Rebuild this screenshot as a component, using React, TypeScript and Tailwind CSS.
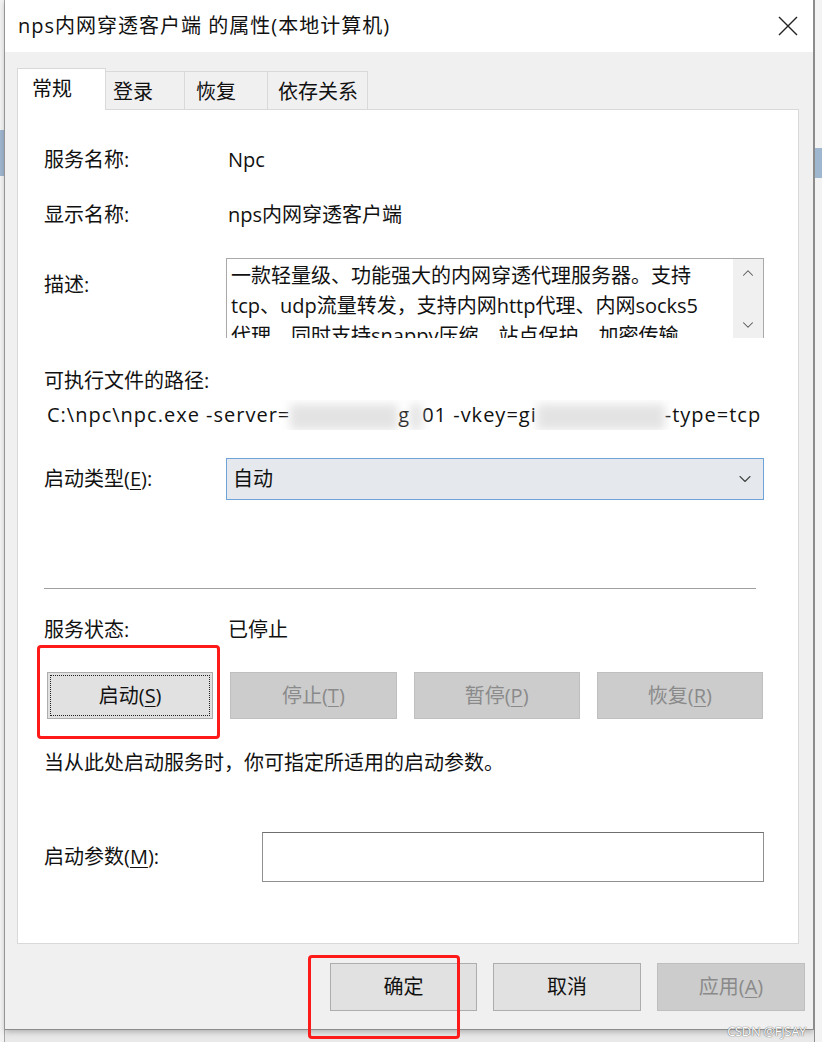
import React from 'react';
import { ChevronDown, ChevronUp } from 'lucide-react';

const Key = ({ children }: { children: React.ReactNode }) => (
  <span className="underline decoration-1 underline-offset-[3px]">{children}</span>
);

type BtnProps = {
  text: string;
  accel?: string;
  disabled?: boolean;
  focused?: boolean;
  className?: string;
};

const WinButton = ({ text, accel, disabled, focused, className = '' }: BtnProps) => (
  <div
    className={`flex items-center justify-center border text-[20px] leading-none ${
      disabled ? 'bg-[#cccccc] border-[#bfbfbf] text-[#8a8a8a]' : 'bg-[#e1e1e1] border-[#adadad] text-[#111]'
    } ${focused ? 'outline-1 outline-dotted outline-[#222] outline-offset-[-4px]' : ''} ${className}`}
  >
    {text}
    {accel && (
      <>
        (<Key>{accel}</Key>)
      </>
    )}
  </div>
);

const Blur = ({ w }: { w: number }) => (
  <span
    className="inline-block h-[26px] align-middle bg-[#d8d8d8] blur-[5px] opacity-70"
    style={{ width: w }}
  />
);

const App = () => {
  return (
    <div className="relative flex h-[1042px] w-[822px] overflow-hidden bg-[#e9e9e9] font-['Open_Sans','Noto_Sans_CJK_SC',sans-serif] text-[#111]">
      {/* background app, left edge */}
      <div className="flex w-[5px] flex-col border-r border-[#a8a8a8] bg-[#f3f3f3]">
        <div className="mt-[130px] h-[46px] bg-[#9fb6cf]" />
      </div>

      {/* dialog */}
      <div className="flex w-[809px] flex-col">
        <div className="flex h-[1030px] flex-col border-b border-r border-[#8c8c8c] shadow-[0_2px_6px_rgba(0,0,0,0.25)]">
          {/* title bar */}
          <div className="flex h-[52px] items-center justify-between bg-white pl-[13px] pr-[15px]">
            <span className="text-[20px] leading-none tracking-[1px]">nps内网穿透客户端 的属性(本地计算机)</span>
            <svg width="20" height="20" viewBox="0 0 20 20">
              <path d="M1 1 L19 19 M19 1 L1 19" stroke="#222" strokeWidth="1.4" />
            </svg>
          </div>

          {/* body */}
          <div className="flex flex-1 flex-col bg-[#f0f0f0]">
            <div className="ml-[12px] mt-[16px] flex h-[41px] items-end text-[20px]">
              <div className="relative z-10 mb-[-1px] h-[42px] w-[89px] border border-b-0 border-[#d9d9d9] bg-white pl-[14px] leading-[40px]">
                常规
              </div>
              <div className="h-[38px] w-[79px] border-r border-t border-[#d9d9d9] pl-[7px] leading-[40px]">登录</div>
              <div className="h-[38px] w-[83px] border-r border-t border-[#d9d9d9] pl-[11px] leading-[40px]">恢复</div>
              <div className="h-[38px] w-[100px] border-r border-t border-[#d9d9d9] pl-[10px] leading-[40px]">依存关系</div>
            </div>

            {/* tab panel */}
            <div className="ml-[12px] flex h-[835px] w-[782px] flex-col border border-[#d9d9d9] bg-white pl-[26px] text-[20px]">
              <div className="mt-[35px] flex h-[30px] items-center leading-[30px]">
                <span className="w-[184px]">服务名称:</span>
                <span>Npc</span>
              </div>
              <div className="mt-[25px] flex h-[30px] items-center leading-[30px]">
                <span className="w-[184px]">显示名称:</span>
                <span>nps内网穿透客户端</span>
              </div>

              <div className="mt-[28px] flex h-[80px]">
                <span className="w-[182px] pt-[12px] leading-[30px]">描述:</span>
                <div className="flex w-[538px] border-l border-r border-t border-[#a9a9a9]">
                  <div className="flex-1 overflow-hidden whitespace-nowrap pl-[4px] pt-[2px] leading-[30px]">
                    <div>一款轻量级、功能强大的内网穿透代理服务器。支持</div>
                    <div>tcp、udp流量转发，支持内网http代理、内网socks5</div>
                    <div>代理，同时支持snappy压缩，站点保护，加密传输，</div>
                  </div>
                  <div className="flex w-[30px] flex-col items-center justify-between bg-[#f0f0f0] pb-[4px] pt-[5px] text-[#555]">
                    <ChevronUp size={18} strokeWidth={1.4} />
                    <ChevronDown size={18} strokeWidth={1.4} />
                  </div>
                </div>
              </div>

              <div className="mt-[28px] h-[30px] leading-[30px]">可执行文件的路径:</div>
              <div className="ml-[3px] mt-[4px] h-[30px] w-[720px] overflow-hidden whitespace-nowrap leading-[30px] tracking-[1px]">
                C:\npc\npc.exe -server=<Blur w={108} />g<Blur w={12} />01 -vkey=gi<Blur w={128} />-type=tcp
              </div>

              <div className="mt-[28px] flex h-[42px] items-center">
                <span className="w-[182px]">
                  启动类型(<Key>E</Key>):
                </span>
                <div className="flex h-[42px] w-[538px] items-center justify-between border border-[#6fa3d8] bg-[#e5e9ee] pl-[6px] pr-[8px]">
                  <span>自动</span>
                  <ChevronDown size={20} strokeWidth={1.3} className="text-[#444]" />
                </div>
              </div>

              <div className="mt-[88px] h-[2px] w-[712px] border-b border-t border-b-white border-t-[#a0a0a0]" />

              <div className="mt-[25px] flex h-[30px] items-center leading-[30px]">
                <span className="w-[184px]">服务状态:</span>
                <span>已停止</span>
              </div>

              <div className="ml-[3px] mt-[27px] grid h-[47px] w-[716px] grid-cols-4 gap-[17px]">
                <div className="relative">
                  <WinButton text="启动" accel="S" focused className="h-full" />
                  <div className="absolute bottom-[-20px] left-[-10px] right-[-7px] top-[-27px] rounded-[4px] border-[3px] border-[#ff1a1a]" />
                </div>
                <WinButton text="停止" accel="T" disabled />
                <WinButton text="暂停" accel="P" disabled />
                <WinButton text="恢复" accel="R" disabled />
              </div>

              <div className="mt-[29px] h-[30px] leading-[30px]">当从此处启动服务时，你可指定所适用的启动参数。</div>

              <div className="mt-[54px] flex h-[50px] items-center">
                <span className="w-[218px]">
                  启动参数(<Key>M</Key>):
                </span>
                <div className="h-[50px] w-[502px] border border-[#8f8f8f] border-t-[#6f6f6f] bg-white" />
              </div>
            </div>

            {/* dialog buttons */}
            <div className="flex flex-1 items-center justify-end gap-[16px] pr-[8px]">
              <div className="relative">
                <WinButton text="确定" className="h-[48px] w-[147px]" />
                <div className="absolute left-[-22px] top-[-8px] h-[84px] w-[152px] rounded-[4px] border-[3px] border-[#ff1a1a]" />
              </div>
              <WinButton text="取消" className="h-[48px] w-[148px]" />
              <WinButton text="应用" accel="A" disabled className="h-[48px] w-[148px]" />
            </div>
          </div>
        </div>
        <div className="flex-1" />
      </div>

      {/* background app, right edge */}
      <div className="flex w-[8px] flex-col border-l border-[#8c8c8c] bg-[#f3f3f3]">
        <div className="mt-[148px] h-[30px] bg-[#9fb6cf]" />
      </div>

      <div className="absolute bottom-[4px] right-[16px] text-[13px] leading-none tracking-tight text-white [text-shadow:0_0_1px_#666,0_0_1px_#666]">
        CSDN @FJSAY
      </div>
    </div>
  );
};

export default App;
